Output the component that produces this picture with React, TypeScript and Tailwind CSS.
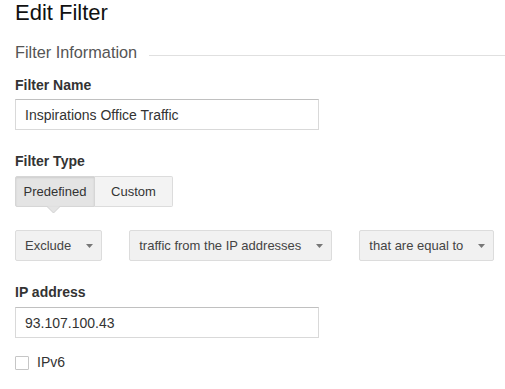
import { useState } from "react";

function Caret() {
  return (
    <svg width="7" height="4" viewBox="0 0 7 4" className="shrink-0">
      <path d="M0 0h7L3.5 4z" fill="#777" />
    </svg>
  );
}

function Select({ label }: { label: string }) {
  return (
    <button className="h-[31px] flex items-center pl-[9px] pr-[8px] gap-[15px] bg-[#f1f1f1] border border-[#dcdcdc] rounded-[2px] text-[13px] text-[#444]">
      <span>{label}</span>
      <Caret />
    </button>
  );
}

function Label({ children }: { children: React.ReactNode }) {
  return (
    <div className="text-[14px] leading-[16px] font-bold text-[#333]">
      {children}
    </div>
  );
}

function TextInput({ value }: { value: string }) {
  return (
    <input
      defaultValue={value}
      className="w-[304px] h-[31px] px-[9px] border border-[#d9d9d9] border-t-[#c0c0c0] text-[14px] text-[#333] outline-none"
    />
  );
}

export default function App() {
  const [filterType, setFilterType] = useState("predefined");
  const [ipv6, setIpv6] = useState(false);

  return (
    <div className="w-[505px] h-[389px] bg-white pl-[15px] font-['Liberation_Sans',Arial,sans-serif] overflow-hidden">
      <h1 className="text-[22px] leading-[25px] text-[#111]">Edit Filter</h1>

      <div className="mt-[18px] flex items-center gap-[12px]">
        <h2 className="text-[16.3px] leading-[18px] text-[#555]">Filter Information</h2>
        <div className="flex-1 h-px bg-[#e0e0e0] mt-[6px]" />
      </div>

      <div className="mt-[16px]">
        <Label>Filter Name</Label>
        <div className="mt-[6px]">
          <TextInput value="Inspirations Office Traffic" />
        </div>
      </div>

      <div className="mt-[23px]">
        <Label>Filter Type</Label>
        <div className="mt-[7px] flex">
          <div className="relative">
            <button
              onClick={() => setFilterType("predefined")}
              className={`w-[80px] h-[31px] text-[13px] text-[#333] border border-[#d6d6d6] rounded-l-[2px] ${
                filterType === "predefined"
                  ? "bg-[#e4e4e4] shadow-[inset_0_1px_2px_rgba(0,0,0,0.1)]"
                  : "bg-[#f5f5f5]"
              }`}
            >
              Predefined
            </button>
            {filterType === "predefined" && (
              <svg
                width="13"
                height="8"
                viewBox="0 0 13 8"
                className="absolute left-[32px] top-[30px]"
              >
                <path d="M0 0.5L6.5 7L13 0.5" fill="#e4e4e4" stroke="#d0d0d0" />
                <path d="M1 0h11" stroke="#e4e4e4" />
              </svg>
            )}
          </div>
          <button
            onClick={() => setFilterType("custom")}
            className={`w-[78px] h-[31px] text-[13px] text-[#333] border border-l-0 border-[#dcdcdc] rounded-r-[2px] ${
              filterType === "custom" ? "bg-[#e4e4e4]" : "bg-[#f3f3f3]"
            }`}
          >
            Custom
          </button>
        </div>
      </div>

      <div className="mt-[23px] flex gap-[27px]">
        <Select label="Exclude" />
        <Select label="traffic from the IP addresses" />
        <Select label="that are equal to" />
      </div>

      <div className="mt-[23px]">
        <Label>IP address</Label>
        <div className="mt-[7px]">
          <TextInput value="93.107.100.43" />
        </div>
      </div>

      <label className="mt-[14px] flex items-center gap-[8px] cursor-pointer">
        <span
          onClick={() => setIpv6(!ipv6)}
          className="w-[14px] h-[14px] border border-[#c6c6c6] rounded-[1px] bg-white flex items-center justify-center"
        >
          {ipv6 && <span className="text-[11px] leading-none">✓</span>}
        </span>
        <span className="text-[14px] text-[#333]">IPv6</span>
      </label>
    </div>
  );
}
